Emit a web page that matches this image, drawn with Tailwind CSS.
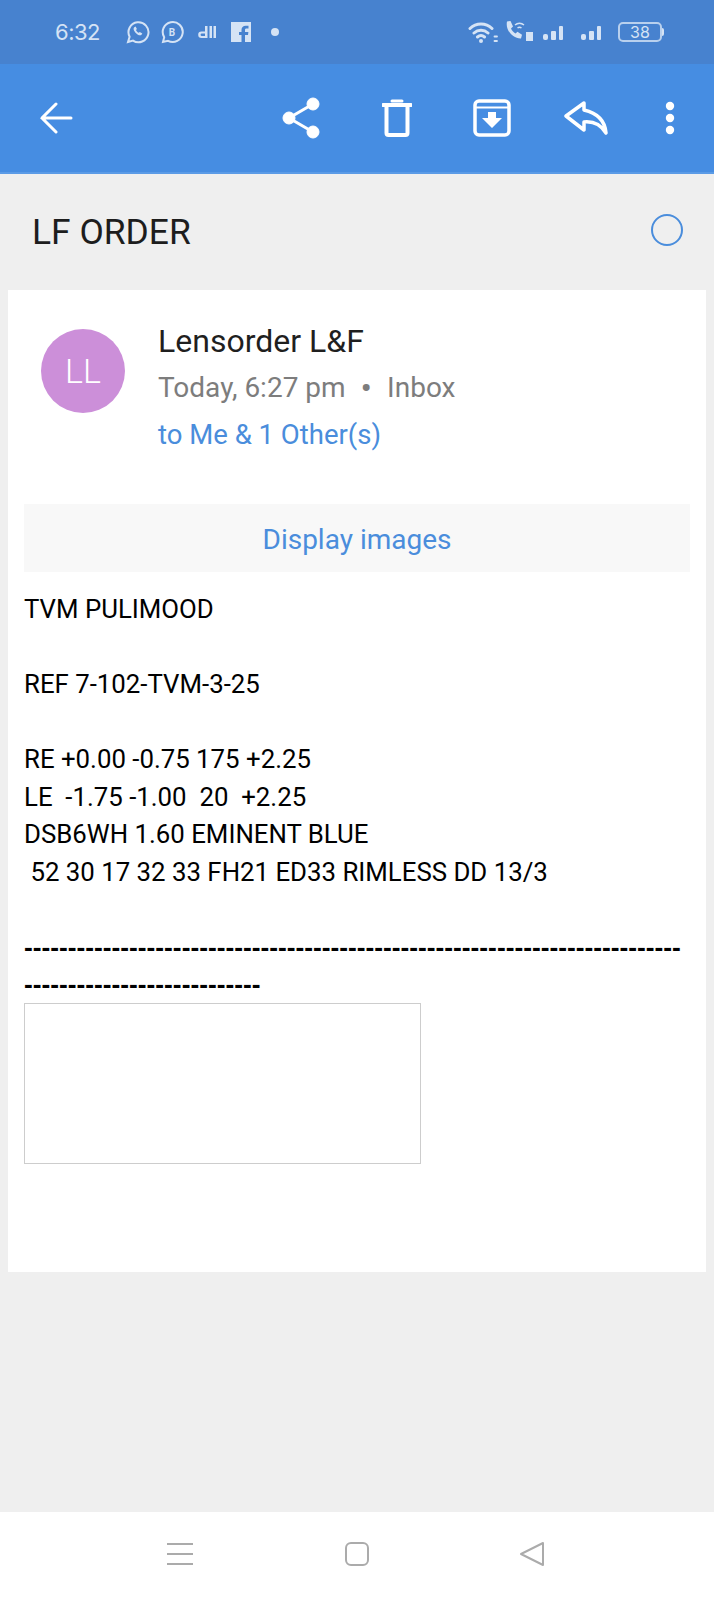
<!DOCTYPE html>
<html lang="en">
<head>
    <meta charset="UTF-8">
    <meta name="viewport" content="width=device-width, initial-scale=1.0">
    <title>LF ORDER</title>
    <script src="https://cdn.jsdelivr.net/npm/@tailwindcss/browser@4"></script>
</head>
<body class="bg-[#efefef] font-['Roboto',sans-serif]">
    <div class="w-[714px] h-[1599px] flex flex-col overflow-hidden">
        <!-- Status bar -->
        <div class="h-[64px] shrink-0 bg-[#4782cf] flex items-center pl-[55px] pr-[50px] text-[#d5e3f5]">
            <span class="text-[22px] font-['Inter',sans-serif] w-[71px] tracking-[-0.5px]">6:32</span>
            <svg class="w-[24px] h-[24px]" viewBox="0 0 24 24" fill="none" stroke="currentColor" stroke-width="2"><path d="M2 22l1.600-5.200A10 10 0 1 1 7 20.600z"/><path d="M8 7.500c-.8 1-.5 3 1.500 5.200s4.300 3 5.800 2.300l1-1.500-2.500-1.500-1 .8c-1-.4-2.300-1.700-2.800-2.900l.9-1-1.300-2.500z" fill="currentColor" stroke="none"/></svg>
            <svg class="w-[24px] h-[24px] ml-[10px]" viewBox="0 0 24 24" fill="none" stroke="currentColor" stroke-width="2"><path d="M3 22l1.200-4.800A10 10 0 1 1 8 20.800z"/><text x="12" y="16" text-anchor="middle" font-size="10" font-weight="700" fill="currentColor" stroke="none" font-family="Roboto">B</text></svg>
            <svg class="w-[18px] h-[14px] ml-[14px]" viewBox="0 0 18 14" fill="currentColor"><path d="M7 1h2.500v12H3.500a3.300 3.300 0 0 1 0-6.600H7zM7 8.500H3.800a1.200 1.200 0 0 0 0 2.400H7z" fill-rule="evenodd"/><path d="M11.500 1h2.500v12h-2.500zM15.500 1H18v12h-2.500z"/></svg>
            <svg class="w-[20px] h-[20px] ml-[15px]" viewBox="0 0 20 20"><path fill="currentColor" d="M0 0h20v20H14v-7h3l.4-3H14V8c0-1 .4-1.500 1.500-1.500H17.500V3.700h-2.700C12 3.700 10.500 5.300 10.500 8v2H8v3h2.500v7H0z"/></svg>
            <span class="w-[8px] h-[8px] rounded-full bg-current ml-[20px]"></span>
            <span class="flex-1"></span>
            <svg class="w-[30px] h-[24px]" viewBox="0 0 30 24" fill="none" stroke="currentColor" stroke-width="3" stroke-linecap="round"><path d="M2 8.500a16 16 0 0 1 22 0M6 13a10.500 10.500 0 0 1 14 0M9.500 17a5.500 5.500 0 0 1 7 0"/><circle cx="13" cy="21" r="2" fill="currentColor" stroke="none"/><path d="M26.500 16.500h2.500M26.500 21h2.500" stroke-width="1.800"/></svg>
            <svg class="w-[30px] h-[24px] ml-[6px]" viewBox="0 0 30 24" fill="none"><path fill="currentColor" d="M3 1.500 6.500 1 9 6.500 7 8.500c.8 2 2.500 3.800 4.500 5l2-1.800 4.500 3-1 3.800C10 19 1 11 3 1.500z"/><path d="M11 5a7 7 0 0 1 9 0M13.500 8a3.500 3.500 0 0 1 4 0" stroke="currentColor" stroke-width="1.500"/><rect x="22" y="12" width="7" height="9" fill="currentColor"/></svg>
            <svg class="w-[22px] h-[16px] ml-[8px] mt-[2px]" viewBox="0 0 22 16" fill="currentColor"><rect x="1" y="9" width="5" height="6" rx="2"/><rect x="9" y="6" width="5" height="9" rx="1"/><rect x="17" y="1" width="4" height="14" rx="1"/></svg>
            <svg class="w-[22px] h-[16px] ml-[16px] mt-[2px]" viewBox="0 0 22 16" fill="currentColor"><rect x="1" y="9" width="5" height="6" rx="2"/><rect x="9" y="6" width="5" height="9" rx="1"/><rect x="17" y="1" width="4" height="14" rx="1"/></svg>
            <div class="ml-[16px] flex items-center">
                <div class="w-[44px] h-[20px] border-2 border-[#d5e3f5]/80 rounded-[5px] flex items-center justify-center text-[16px] leading-none font-['Inter',sans-serif]">38</div>
                <span class="w-[2px] h-[8px] bg-[#d5e3f5] rounded-r-sm"></span>
            </div>
        </div>

        <!-- Toolbar -->
        <div class="h-[110px] shrink-0 bg-[#468de2] border-b-2 border-[#5b9be6] flex items-center text-white pl-[39px] pr-[39px]">
            <svg class="w-[34px] h-[32px]" viewBox="0 0 34 32" fill="none" stroke="currentColor" stroke-width="3" stroke-linecap="round"><path d="M32 16H3M17 2 3 16l14 14"/></svg>
            <span class="flex-1"></span>
            <svg class="w-[38px] h-[42px]" viewBox="0 0 38 42" fill="currentColor" stroke="currentColor"><path d="M31 7 7 21l24 14" fill="none" stroke-width="3"/><circle cx="31" cy="7" r="6"/><circle cx="7" cy="21" r="6"/><circle cx="31" cy="35" r="6"/></svg>
            <svg class="w-[30px] h-[38px] ml-[62px]" viewBox="0 0 30 38" fill="none" stroke="currentColor" stroke-width="4"><path d="M1 6h28" stroke-linecap="round"/><path d="M10 2h10" stroke-linecap="round" stroke-width="3"/><path d="M4.500 7v27a2 2 0 0 0 2 2h17a2 2 0 0 0 2-2V7" stroke-linejoin="round"/></svg>
            <svg class="w-[38px] h-[38px] ml-[61px]" viewBox="0 0 38 38" fill="none"><rect x="2" y="2" width="34" height="34" rx="4" stroke="currentColor" stroke-width="3.500"/><path d="M2 8.500h34" stroke="currentColor" stroke-width="2"/><path fill="currentColor" d="M15 13h8v6h6L19 29 9 19h6z"/></svg>
            <svg class="w-[44px] h-[34px] ml-[53px]" viewBox="0 0 44 34" fill="none" stroke="currentColor" stroke-width="3.500" stroke-linejoin="round"><path d="M20 2 2 15l18 14v-8c10-1 17 3 22 11-1-12-9-20-22-23z"/></svg>
            <svg class="w-[10px] h-[34px] ml-[57px]" viewBox="0 0 10 34" fill="currentColor"><circle cx="5" cy="5" r="4.200"/><circle cx="5" cy="17" r="4.200"/><circle cx="5" cy="29" r="4.200"/></svg>
        </div>

        <!-- Subject -->
        <div class="h-[116px] shrink-0 flex items-center justify-between pl-[32px] pr-[31px]">
            <h1 class="text-[35.400px] text-[#1d1d1d] pt-[2px]">LF ORDER</h1>
            <span class="w-[32px] h-[32px] rounded-full border-2 border-[#4a8ddc] mb-[4px]"></span>
        </div>

        <!-- Message card -->
        <div class="mx-[8px] bg-white h-[982px] shrink-0 px-[16px]">
            <div class="flex pt-[28px] pl-[17px] h-[214px]">
                <div class="w-[84px] h-[84px] mt-[11px] rounded-full bg-[#cc8fd9] flex items-center justify-center text-white text-[34px] font-light">LL</div>
                <div class="ml-[33px]">
                    <div class="text-[32px] leading-[48px] -mt-[1px] text-[#1f1f1f]">Lensorder L&amp;F</div>
                    <div class="flex text-[28px] leading-[46px] text-[#7d7d7d]">Today, 6:27 pm<span class="mx-[15px] text-[34px]">•</span>Inbox</div>
                    <div class="text-[27.500px] leading-[47px] text-[#4a8ddc]">to Me &amp; 1 Other(s)</div>
                </div>
            </div>
            <div class="h-[68px] bg-[#f8f8f8] flex items-center justify-center pt-[4px] text-[28px] text-[#4a8ddc]">Display images</div>
            <div class="pt-[19px] text-[25.800px] leading-[37.500px] text-black whitespace-pre">TVM PULIMOOD

REF 7-102-TVM-3-25

RE +0.00 -0.75 175 +2.25
LE  -1.75 -1.00  20  +2.25
DSB6WH 1.60 EMINENT BLUE
 52 30 17 32 33 FH21 ED33 RIMLESS DD 13/3

</div>
            <div class="w-[660px] text-[26.300px] leading-[37.500px] font-bold text-black break-all font-['Liberation_Sans',sans-serif]">------------------------------------------------------------------------------------------------------</div>
            <div class="w-[397px] h-[161px] border border-[#cdcdcd] bg-white -mt-[1px]"></div>
        </div>

        <span class="flex-1"></span>

        <!-- Nav bar -->
        <div class="h-[87px] shrink-0 bg-white flex items-center pb-[4px] text-[#ababab]">
            <div class="ml-[167px] w-[26px] flex flex-col gap-[8px]">
                <span class="h-[2px] bg-current"></span>
                <span class="h-[2px] bg-current"></span>
                <span class="h-[2px] bg-current"></span>
            </div>
            <span class="ml-[152px] w-[24px] h-[24px] border-2 border-current rounded-[6px]"></span>
            <svg class="ml-[150px] w-[26px] h-[26px]" viewBox="0 0 26 26" fill="none" stroke="currentColor" stroke-width="2" stroke-linejoin="round"><path d="M24 2v22L2 13z"/></svg>
        </div>
    </div>
</body>
</html>
